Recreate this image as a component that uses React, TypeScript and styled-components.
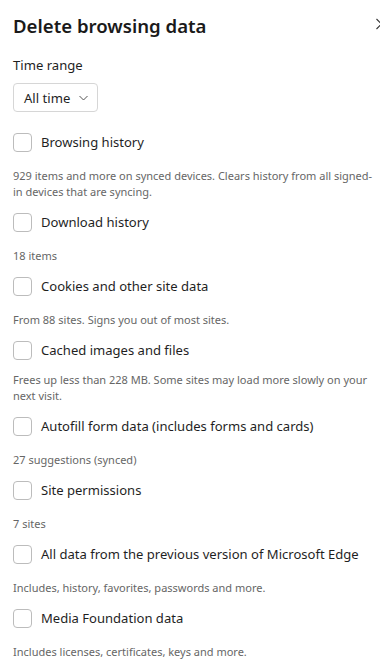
import React from "react";
import styled, { createGlobalStyle } from "styled-components";

const Global = createGlobalStyle`
  html, body { margin: 0; padding: 0; background: #fff; overflow: hidden; }
  body { font-family: "Noto Sans", "Open Sans", sans-serif; color: #1b1b1b; }
`;

const Panel = styled.div`
  width: 380px;
  height: 666px;
  box-sizing: border-box;
  padding: 0 0 0 13px;
  display: flex;
  flex-direction: column;
  overflow: hidden;
`;

const Header = styled.div`
  display: flex;
  align-items: center;
  justify-content: space-between;
  height: 56px;
`;

const Title = styled.h1`
  margin: 0;
  font-size: 18.6px;
  font-weight: 600;
  color: #1a1a1a;
`;

const Chevron = styled.svg`
  width: 8px;
  height: 12px;
  margin-right: -3px;
  margin-top: -3px;
  flex: none;
`;

const SectionLabel = styled.div`
  font-size: 13.1px;
  color: #1f1f1f;
  margin-top: 5px;
  line-height: 20px;
`;

const Dropdown = styled.button`
  margin-top: 8px;
  width: 85px;
  height: 32px;
  box-sizing: border-box;
  border: 1px solid #d6d6d6;
  border-radius: 4px;
  background: #fff;
  display: flex;
  align-items: center;
  gap: 9px;
  padding: 0 0 0 10px;
  font-family: inherit;
  font-size: 13.1px;
  color: #1f1f1f;
  margin-bottom: 14px;
`;

const List = styled.div`
  display: flex;
  flex-direction: column;
`;

const Item = styled.div`
  display: flex;
  flex-direction: column;
  padding-bottom: 6.5px;
`;

const Row = styled.label`
  display: flex;
  align-items: center;
  gap: 9px;
  height: 32px;
`;

const Box = styled.span`
  width: 19px;
  height: 19px;
  box-sizing: border-box;
  border: 1px solid #bcbcbc;
  border-radius: 4px;
  background: #fff;
  flex: none;
`;

const Label = styled.span`
  font-size: 13.05px;
  color: #1f1f1f;
`;

const Desc = styled.div<{ $tight?: boolean }>`
  margin-top: ${(p) => (p.$tight ? "5.5px" : "9.5px")};
  font-size: 11px;
  line-height: 16px;
  color: #666666;
`;

const items: { label: string; desc: string; tight?: boolean }[] = [
  {
    label: "Browsing history",
    desc:
      "929 items and more on synced devices. Clears history from all signed-in devices that are syncing.",
  },
  { label: "Download history", desc: "18 items" },
  { label: "Cookies and other site data", desc: "From 88 sites. Signs you out of most sites." },
  {
    label: "Cached images and files",
    desc: "Frees up less than 228 MB. Some sites may load more slowly on your next visit.",
    tight: true,
  },
  { label: "Autofill form data (includes forms and cards)", desc: "27 suggestions (synced)" },
  { label: "Site permissions", desc: "7 sites" },
  {
    label: "All data from the previous version of Microsoft Edge",
    desc: "Includes, history, favorites, passwords and more.",
  },
  { label: "Media Foundation data", desc: "Includes licenses, certificates, keys and more." },
];

export default function App() {
  return (
    <>
      <Global />
      <Panel>
        <Header>
          <Title>Delete browsing data</Title>
          <Chevron viewBox="0 0 8 12">
            <path d="M1.5 1 L6.5 6 L1.5 11" fill="none" stroke="#333" strokeWidth="1.1" />
          </Chevron>
        </Header>
        <SectionLabel>Time range</SectionLabel>
        <Dropdown>
          All time
          <svg width="9" height="6" viewBox="0 0 9 6">
            <path d="M0.5 1 L4.5 5 L8.5 1" fill="none" stroke="#555" strokeWidth="1" />
          </svg>
        </Dropdown>
        <List>
          {items.map((it) => (
            <Item key={it.label}>
              <Row>
                <Box />
                <Label>{it.label}</Label>
              </Row>
              <Desc $tight={it.tight}>{it.desc}</Desc>
            </Item>
          ))}
        </List>
      </Panel>
    </>
  );
}
